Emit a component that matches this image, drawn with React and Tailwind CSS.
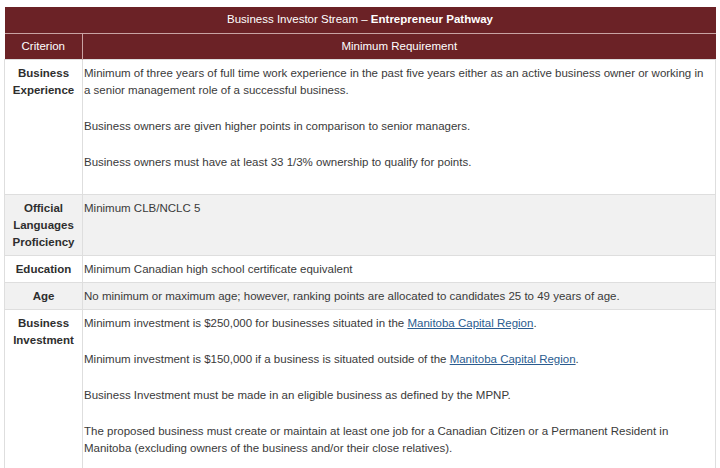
export default function App() {
  const font = { fontFamily: '"Liberation Sans", Arial, sans-serif' };
  const link = "text-[#2b5c8f] underline";
  const c1 = "border border-[#dedede] pt-[5px] pb-[4px] px-[1px] text-center font-bold text-[#2e2e2e]";
  const c2 = "border border-[#dedede] pt-[5px] pb-[4px] pl-[1px] pr-[4px]";
  return (
    <div className="w-[720px] h-[468px] bg-white overflow-hidden pt-[7px] pl-[4px]" style={font}>
      <table className="w-[712px] border-collapse text-[11.5px] leading-[17px] text-[#3a3a3a]">
        <colgroup>
          <col className="w-[78px]" />
          <col />
        </colgroup>
        <thead>
          <tr className="bg-[#6b2226] text-white">
            <th colSpan={2} className="h-[26px] p-0 font-normal text-center border-b border-[#c9a3a3]">
              Business Investor Stream – <b className="font-bold">Entrepreneur Pathway</b>
            </th>
          </tr>
          <tr className="bg-[#6b2226] text-white">
            <th className="h-[26px] p-0 font-normal text-center border-r border-[#c9a3a3]">Criterion</th>
            <th className="h-[26px] p-0 font-normal text-center">Minimum Requirement</th>
          </tr>
        </thead>
        <tbody>
          <tr className="align-top">
            <td className={c1}>Business Experience</td>
            <td className={c2}>
              <p className="mb-[19px]">Minimum of three years of full time work experience in the past five years either as an active business owner or working in a senior management role of a successful business.</p>
              <p className="mb-[19px]">Business owners are given higher points in comparison to senior managers.</p>
              <p className="mb-[19px]">Business owners must have at least 33 1/3% ownership to qualify for points.</p>
            </td>
          </tr>
          <tr className="align-top bg-[#f1f1f1]">
            <td className={c1}>Official Languages Proficiency</td>
            <td className={c2}>
              <p className="mb-[19px]">Minimum CLB/NCLC 5</p>
            </td>
          </tr>
          <tr className="align-top">
            <td className={c1}>Education</td>
            <td className={c2}>Minimum Canadian high school certificate equivalent</td>
          </tr>
          <tr className="align-top bg-[#f1f1f1]">
            <td className={c1}>Age</td>
            <td className={c2}>No minimum or maximum age; however, ranking points are allocated to candidates 25 to 49 years of age.</td>
          </tr>
          <tr className="align-top">
            <td className={c1}>Business Investment</td>
            <td className={c2}>
              <p className="mb-[19px]">Minimum investment is $250,000 for businesses situated in the <a className={link}>Manitoba Capital Region</a>.</p>
              <p className="mb-[19px]">Minimum investment is $150,000 if a business is situated outside of the <a className={link}>Manitoba Capital Region</a>.</p>
              <p className="mb-[19px]">Business Investment must be made in an eligible business as defined by the MPNP.</p>
              <p className="mb-[19px]">The proposed business must create or maintain at least one job for a Canadian Citizen or a Permanent Resident in Manitoba (excluding owners of the business and/or their close relatives).</p>
            </td>
          </tr>
        </tbody>
      </table>
    </div>
  );
}
